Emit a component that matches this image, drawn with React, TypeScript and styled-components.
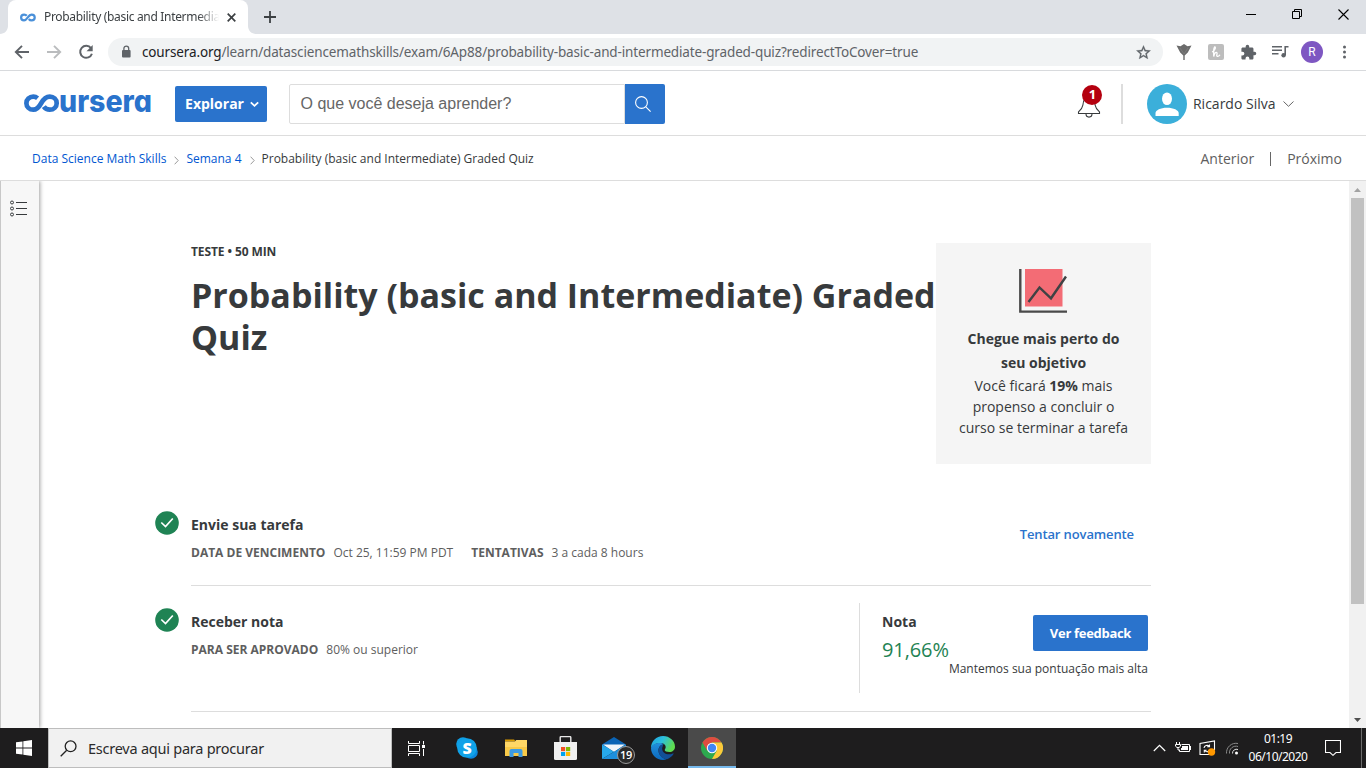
import React from 'react';
import styled, { createGlobalStyle } from 'styled-components';

const BLUE = '#2a73cc';
const UI = '"Noto Sans", "Open Sans", sans-serif';
const BODY = '"Open Sans", "Noto Sans", sans-serif';

const GlobalStyle = createGlobalStyle`
  * { box-sizing: border-box; }
  body { margin: 0; background: #fff; overflow: hidden; font-family: ${BODY}; }
  button { font: inherit; border: 0; padding: 0; background: none; }
  h1, p { margin: 0; }
  svg { display: block; flex: none; }
`;

const Screen = styled.div`
  width: 1366px;
  height: 768px;
  display: flex;
  flex-direction: column;
  overflow: hidden;
  background: #fff;
`;

const Label = styled.span<{ $size?: number; $weight?: number; $color?: string; $track?: number; $line?: number }>`
  font-size: ${p => p.$size ?? 14}px;
  font-weight: ${p => p.$weight ?? 400};
  color: ${p => p.$color ?? '#373a3c'};
  letter-spacing: ${p => p.$track ?? 0}px;
  line-height: ${p => p.$line ?? 20}px;
  white-space: nowrap;
`;

/* Browser chrome */
const TabStrip = styled.div`
  height: 34px;
  flex: none;
  background: #dee1e6;
  display: flex;
  justify-content: space-between;
`;
const TabGroup = styled.div`
  display: flex;
  align-items: center;
`;
const TabCurve = styled.svg`
  align-self: flex-end;
`;
const Tab = styled.div`
  width: 240px;
  height: 34px;
  padding: 0 10px 0 12px;
  display: flex;
  align-items: center;
  background: #fff;
  border-radius: 8px 8px 0 0;
`;
const TabTitle = styled.div`
  width: 175px;
  margin: 0 8px 0 8px;
  overflow: hidden;
  white-space: nowrap;
  font: 12px/18px ${UI};
  letter-spacing: -0.32px;
  color: #3c4043;
  mask-image: linear-gradient(to right, #000 88%, transparent);
`;
const NewTab = styled.div`
  margin-left: 8px;
`;
const WindowButtons = styled.div`
  display: flex;
  align-items: center;
  height: 29px;
  gap: 35px;
  padding-right: 17px;
`;
const Toolbar = styled.div`
  height: 37px;
  flex: none;
  display: flex;
  align-items: center;
  padding: 0 6px 0 14px;
  border-bottom: 1px solid #d8dadd;
`;
const NavButtons = styled.div`
  display: flex;
  gap: 16px;
  width: 94px;
`;
const Omnibox = styled.div`
  width: 1055px;
  height: 28px;
  padding: 0 11px 0 12px;
  border-radius: 14px;
  background: #f1f3f4;
  display: flex;
  align-items: center;
`;
const Url = styled.div`
  flex: 1;
  margin-left: 10px;
  font: 13.5px/20px ${UI};
  letter-spacing: -0.14px;
  color: #5f6368;
  white-space: nowrap;
  b { font-weight: 400; color: #202124; }
`;
const Extensions = styled.div`
  display: grid;
  grid-template-columns: repeat(6, 32px);
  align-items: center;
  justify-items: center;
  margin-left: auto;
`;
const ProfileDot = styled.div`
  width: 22px;
  height: 22px;
  border-radius: 50%;
  background: #7e57c2;
  color: #fff;
  font: 12px/22px Roboto, sans-serif;
  text-align: center;
`;

/* Site header */
const SiteHeader = styled.header`
  height: 65px;
  flex: none;
  display: flex;
  align-items: center;
  padding: 0 72px 0 24px;
  border-bottom: 1px solid #ddd;
`;
const LogoArt = styled.svg`
  overflow: visible;
`;
const Explore = styled.button`
  width: 92px;
  height: 36px;
  margin: 1px 22px 0 23px;
  padding-left: 2px;
  border-radius: 2px;
  background: ${BLUE};
  display: flex;
  align-items: center;
  justify-content: center;
  gap: 6px;
`;
const ExploreArrow = styled.svg`
  margin-top: 2px;
`;
const Search = styled.div`
  width: 376px;
  height: 40px;
  margin-top: 1px;
  display: flex;
`;
const SearchField = styled.div`
  flex: 1;
  padding-left: 10.5px;
  border: 1px solid #ddd;
  border-radius: 2px 0 0 2px;
  font: 16px/37px "Liberation Sans", Arial, sans-serif;
  color: #666;
`;
const SearchButton = styled.button`
  width: 40px;
  display: grid;
  place-items: center;
  background: ${BLUE};
  border-radius: 0 2px 2px 0;
  svg { margin-right: 4px; }
`;
const Account = styled.div`
  margin: 1px 0 0 auto;
  display: flex;
  align-items: center;
  height: 40px;
`;
const Bell = styled.div`
  position: relative;
  width: 24px;
  height: 40px;
  margin-right: 20px;
`;
const Badge = styled.span`
  position: absolute;
  left: 5px;
  top: 1px;
  width: 20px;
  height: 20px;
  border-radius: 50%;
  background: #b4000f;
  color: #fff;
  font-size: 13px;
  font-weight: 700;
  line-height: 19px;
  text-align: center;
`;
const BellIcon = styled.svg`
  margin-top: 8px;
`;
const HeaderRule = styled.i`
  width: 2px;
  height: 40px;
  margin-right: 24px;
  background: #ddd;
`;
const Name = styled.div`
  margin: 0 7.5px 0 5.6px;
  display: flex;
`;

const CrumbBar = styled.nav`
  height: 45px;
  flex: none;
  display: flex;
  align-items: center;
  justify-content: space-between;
  padding: 2px 24px 0 32px;
  border-bottom: 1px solid #ddd;
`;
const Crumbs = styled.div`
  display: flex;
  align-items: center;
`;
const CrumbArrow = styled.svg`
  margin: 2px 7px 0 8px;
`;
const Pager = styled.div`
  display: flex;
  align-items: center;
`;
const PagerRule = styled.i`
  width: 1px;
  height: 14px;
  margin: 0 16px;
  background: #666;
`;

/* Page body */
const Body = styled.div`
  flex: 1;
  min-height: 0;
  display: flex;
`;
const Rail = styled.aside`
  width: 39px;
  margin-right: 1px;
  padding: 19px 0 0 9px;
  border-left: 1px solid #c8c8c8;
  background: #f7f7f7;
  box-shadow: 1px 0 4px rgba(0, 0, 0, 0.38);
  clip-path: inset(0 -6px 0 0);
`;
const Main = styled.main`
  flex: 1;
  padding-left: 151px;
`;
const Column = styled.div`
  width: 960px;
`;
const Intro = styled.section`
  height: 316px;
  padding-top: 62px;
  display: flex;
`;
const Heading = styled.div`
  width: 745px;
  flex: none;
`;
const Title = styled.h1`
  margin-top: 13px;
  font-size: 34px;
  line-height: 42px;
  font-weight: 700;
  color: #373a3c;
`;
const Promo = styled.aside`
  width: 215px;
  height: 221px;
  padding-top: 26px;
  background: #f5f5f5;
  display: flex;
  flex-direction: column;
  align-items: center;
  text-align: center;
  color: #373a3c;
`;
const PromoIcon = styled.svg`
  margin-right: 1px;
`;
const PromoTitle = styled.p`
  margin-top: 14px;
  font-size: 14px;
  font-weight: 700;
  line-height: 24px;
`;
const PromoText = styled.p`
  font-size: 14px;
  line-height: 21px;
`;
const Step = styled.section<{ $height: number; $top: number }>`
  height: ${p => p.$height}px;
  padding-top: ${p => p.$top}px;
  border-bottom: 1px solid #ddd;
  display: flex;
`;
const StepMark = styled.div`
  width: 36px;
  margin: -2px 0 0 -36px;
`;
const StepText = styled.div`
  display: flex;
  flex-direction: column;
`;
const Facts = styled.div`
  display: flex;
  margin-top: 7px;
  gap: 8px;
`;
const FactGap = styled.i`
  width: 2px;
`;
const Retry = styled.button`
  display: flex;
  height: 20px;
  margin: 11px 17px 0 auto;
`;
const Grade = styled.div`
  width: 292px;
  height: 90px;
  margin: -7px 0 0 auto;
  padding: 7px 3px 0 22px;
  border-left: 1px solid #ddd;
`;
const GradeTop = styled.div`
  display: flex;
  justify-content: space-between;
  align-items: flex-start;
  height: 50px;
`;
const Score = styled.div`
  display: flex;
  flex-direction: column;
  gap: 1px;
`;
const Feedback = styled.button`
  width: 115px;
  height: 36px;
  margin-top: 5px;
  padding-bottom: 2px;
  border-radius: 2px;
  background: ${BLUE};
`;
const GradeNote = styled.div`
  display: flex;
  justify-content: flex-end;
`;
const Scrollbar = styled.div`
  width: 17px;
  padding: 0 2px;
  background: #f1f1f1;
  display: flex;
  flex-direction: column;
  align-items: stretch;
`;
const ScrollArrow = styled.div`
  height: 17px;
  display: grid;
  place-items: center;
`;
const Thumb = styled.div`
  height: 406px;
  background: #c1c1c1;
  margin-bottom: auto;
`;

/* Taskbar */
const Taskbar = styled.footer`
  height: 40px;
  flex: none;
  display: flex;
  background: #1e1d1e;
`;
const Start = styled.div`
  width: 48px;
  display: grid;
  place-items: center;
`;
const TaskSearch = styled.div`
  width: 344px;
  padding-left: 11px;
  display: flex;
  align-items: center;
  gap: 11px;
  background: #f1f1f1;
  border: 1px solid #bdbdbd;
`;
const TaskLabel = styled.span`
  font: 14.5px/20px ${UI};
  letter-spacing: -0.24px;
  color: #2b2b2b;
`;
const TaskButton = styled.div<{ $active?: boolean; $first?: boolean }>`
  position: relative;
  width: 48px;
  margin-right: ${p => (p.$first ? 3 : 1)}px;
  display: grid;
  place-items: center;
  background: ${p => (p.$active ? '#4a4a4a' : 'transparent')};
  box-shadow: ${p => (p.$active ? 'inset 0 -2px #76b9ed' : 'none')};
`;
const MailCount = styled.span`
  position: absolute;
  left: 27px;
  top: 18px;
  width: 18px;
  height: 18px;
  border-radius: 50%;
  border: 1px solid #9a9a9a;
  background: #2a2a2a;
  color: #fff;
  font: 600 11px/16px ${BODY};
  letter-spacing: -0.3px;
  text-align: center;
`;
const Tray = styled.div`
  margin-left: auto;
  display: flex;
  align-items: center;
`;
const TrayIcons = styled.div`
  display: flex;
  align-items: center;
  gap: 7px;
  margin-right: 9px;
`;
const Clock = styled.div`
  width: 60px;
  font: 12px/18px ${UI};
  letter-spacing: -0.5px;
  color: #fff;
  text-align: center;
`;
const Notice = styled.div`
  margin: 0 20px 0 17px;
`;
const Peek = styled.i`
  width: 5px;
  height: 40px;
  border-left: 1px solid #6b6b6b;
`;

const TabIcon = () => (
  <svg width="16" height="9" viewBox="0 0 36 18" fill="none" stroke="#4a90d9" strokeWidth="5">
    <path d="M15.300 5.100C13.800 3.200 11.700 2.500 9.200 2.500C5.300 2.500 2.500 5.200 2.500 9s2.700 6.500 6.600 6.500c7.600 0 8.600-13 17-13 4 0 7 2.700 7 6.500s-3 6.500-6.900 6.500c-2.700 0-4.900-1.100-6.300-3.100" />
  </svg>
);

const Logo = () => (
  <LogoArt width="128" height="24" viewBox="0 0 128 24">
    <path fill="none" stroke={BLUE} strokeWidth="4.700" d="M13.600 7.200C12.400 6.200 11 5.700 9.300 5.700C5.400 5.700 2.400 8.500 2.400 12.200s3 6.500 6.900 6.500c3.300 0 5.500-2.200 7.700-6.200c2.300-4.200 4.900-6.800 8.800-6.800c3.900 0 6.900 2.800 6.900 6.500s-3 6.500-6.900 6.500c-2.500 0-4.700-1.100-6-3" />
    <text x="35" y="21.200" fontFamily="Inter, sans-serif" fontWeight="800" fontSize="30.500" fill={BLUE} textLength="93" lengthAdjust="spacingAndGlyphs" style={{ fontFeatureSettings: '"cv11"' }}>ursera</text>
  </LogoArt>
);

const Check = () => (
  <svg width="24" height="24" viewBox="0 0 24 24">
    <circle cx="12" cy="12" r="11.800" fill="#1f8354" />
    <path d="M6.300 11.500l4.200 4L17.800 7.500" fill="none" stroke="#fff" strokeWidth="1.700" />
  </svg>
);

const CrumbSep = () => (
  <CrumbArrow width="5" height="9" viewBox="0 0 5 9" fill="none" stroke="#999">
    <path d="M.6.700l3.600 3.800L.6 8.300" />
  </CrumbArrow>
);

export default function App() {
  return (
    <Screen>
      <GlobalStyle />
      <TabStrip>
        <TabGroup>
          <TabCurve width="8" height="8"><path d="M8 0v8H0c4.400 0 8-3.600 8-8z" fill="#fff" /></TabCurve>
          <Tab>
            <TabIcon />
            <TabTitle>Probability (basic and Intermedia</TabTitle>
            <svg width="9" height="9" viewBox="0 0 9 9" stroke="#3c4043" strokeWidth="1.700"><path d="M.7.700l7.600 7.600M8.300.700L.7 8.300" /></svg>
          </Tab>
          <TabCurve width="8" height="8"><path d="M0 0v8h8c-4.400 0-8-3.600-8-8z" fill="#fff" /></TabCurve>
          <NewTab>
            <svg width="12" height="12" stroke="#3c4043" strokeWidth="1.800"><path d="M6 0v12M0 6h12" /></svg>
          </NewTab>
        </TabGroup>
        <WindowButtons>
          <svg width="11" height="11" stroke="#000"><path d="M0 5.500h10" /></svg>
          <svg width="11" height="11" fill="none" stroke="#000"><path d="M.5 2.500h7v7h-7zM2.500 2.500v-2h7v7h-2" /></svg>
          <svg width="11" height="11" stroke="#000" strokeWidth="1.100"><path d="M.5.500l10 10M10.500.500l-10 10" /></svg>
        </WindowButtons>
      </TabStrip>
      <Toolbar>
        <NavButtons>
          <svg width="16" height="16" viewBox="0 0 16 16" fill="none" stroke="#5f6368" strokeWidth="1.900"><path d="M15 8H2.500M8 1.800L1.800 8 8 14.200" /></svg>
          <svg width="16" height="16" viewBox="0 0 16 16" fill="none" stroke="#babcbe" strokeWidth="1.900"><path d="M1 8h12.500M8 1.800L14.200 8 8 14.200" /></svg>
          <svg width="16" height="16" viewBox="0 0 16 16"><path d="M13 4.200A6 6 0 1 0 13.900 9.700" fill="none" stroke="#5f6368" strokeWidth="2" /><path d="M14.700 1v6.200H8.500z" fill="#5f6368" /></svg>
        </NavButtons>
        <Omnibox>
          <svg width="12" height="14" viewBox="0 0 12 14"><rect x="2" y="5" width="8.600" height="7.600" rx="1" fill="#5f6368" /><path d="M3.900 5.500V3.500a2.400 2.400 0 0 1 4.800 0v2" fill="none" stroke="#5f6368" strokeWidth="1.300" /></svg>
          <Url><b>coursera.org</b>/learn/datasciencemathskills/exam/6Ap88/probability-basic-and-intermediate-graded-quiz?redirectToCover=true</Url>
          <svg width="17" height="17" viewBox="0 0 24 24" fill="#5f6368"><path d="M22 9.240l-7.190-.62L12 2 9.190 8.630 2 9.240l5.460 4.730L5.820 21 12 17.270 18.180 21l-1.630-7.030L22 9.240zM12 15.400l-3.760 2.270 1-4.280-3.320-2.880 4.380-.38L12 6.100l1.710 4.040 4.380.38-3.320 2.880 1 4.280L12 15.400z" stroke="#5f6368" strokeWidth=".4" /></svg>
        </Omnibox>
        <Extensions>
          <svg width="18" height="17" viewBox="0 0 18 17"><path d="M1.500 1.500l4 .8L9 0l3.500 2.300 4-.8L12.800 8.500 9.700 11.500v4.500H8.300v-4.500L5.200 8.500z" fill="#6b6b6b" /><path d="M5 4l4 6 4-6" fill="none" stroke="#7c7c7c" /></svg>
          <svg width="16" height="16" viewBox="0 0 16 16"><rect width="16" height="16" rx="2" fill="#bdbdbd" /><path d="M4.500 7.800C6.300 6.800 7.800 4.300 7.300 3.200S5.700 4 5.700 6.500V12.600C6.300 9.800 7.300 8.200 8.400 8.300c1.300.1.300 2.400.3 3.300s1.800 1.200 3-.4" fill="none" stroke="#fff" strokeWidth="1.300" strokeLinecap="round" /></svg>
          <svg width="17" height="17" viewBox="0 0 24 24" fill="#5f6368"><path d="M20.500 11H19V7c0-1.100-.9-2-2-2h-4V3.500a2.500 2.500 0 0 0-5 0V5H4c-1.100 0-2 .9-2 2v3.800h1.500a2.700 2.700 0 0 1 0 5.400H2V20c0 1.100.9 2 2 2h3.800v-1.500a2.700 2.700 0 0 1 5.400 0V22H17c1.100 0 2-.9 2-2v-4h1.500a2.500 2.500 0 0 0 0-5z" /></svg>
          <svg width="17" height="14" viewBox="0 0 17 14" fill="none" stroke="#5f6368" strokeWidth="1.600"><path d="M0 1.800h10M0 5.300h10M0 8.800h6.500M13.200 10V1.800h3.300" /><circle cx="11.600" cy="10.200" r="2.200" fill="#5f6368" stroke="none" /></svg>
          <ProfileDot>R</ProfileDot>
          <svg width="16" height="16" viewBox="0 0 16 16" fill="#5f6368"><circle cx="8.500" cy="2.900" r="1.500" /><circle cx="8.500" cy="8" r="1.500" /><circle cx="8.500" cy="13.100" r="1.500" /></svg>
        </Extensions>
      </Toolbar>

      <SiteHeader>
        <Logo />
        <Explore>
          <Label $weight={700} $color="#fff">Explorar</Label>
          <ExploreArrow width="9" height="7" viewBox="0 0 9 7" fill="none" stroke="#fff" strokeWidth="1.800"><path d="M.8 1.300l3.700 3.500 3.700-3.500" /></ExploreArrow>
        </Explore>
        <Search>
          <SearchField>O que você deseja aprender?</SearchField>
          <SearchButton>
            <svg width="16" height="16" viewBox="0 0 16 16" fill="none" stroke="#fff" strokeWidth="1.100"><circle cx="6.500" cy="6.500" r="5.900" /><path d="M10.800 10.800l4.800 4.800" /></svg>
          </SearchButton>
        </Search>
        <Account>
          <Bell>
            <BellIcon width="24" height="28" viewBox="0 0 24 28" fill="none" stroke="#373a3c" strokeWidth="1.100"><path d="M1.500 21.500h21v-1.600c-2.300-2-4-3.700-4.400-6.900C17.500 7.500 15 4.500 12 4.500S6.500 7.500 5.900 13c-.4 3.200-2.100 4.900-4.400 6.900zM9 21.800a3 3.300 0 0 0 6 0" /></BellIcon>
            <Badge>1</Badge>
          </Bell>
          <HeaderRule />
          <svg width="40" height="40" viewBox="0 0 40 40"><circle cx="20" cy="20" r="20" fill="#3bafda" /><ellipse cx="20" cy="14.700" rx="5" ry="6.300" fill="#fff" /><path d="M8.500 32v-3c0-2.800 5-5.300 11.500-5.300s11.700 2.500 11.700 5.300v3z" fill="#fff" /></svg>
          <Name><Label>Ricardo Silva</Label></Name>
          <svg width="11" height="7" viewBox="0 0 11 7" fill="none" stroke="#666"><path d="M.5 1.500l5 4.800 5-4.800" /></svg>
        </Account>
      </SiteHeader>
      <CrumbBar>
        <Crumbs>
          <Label $size={12} $color="#0156d1">Data Science Math Skills</Label>
          <CrumbSep />
          <Label $size={12} $color="#0156d1">Semana 4</Label>
          <CrumbSep />
          <Label $size={12}>Probability (basic and Intermediate) Graded Quiz</Label>
        </Crumbs>
        <Pager>
          <Label $color="#5e5e5e">Anterior</Label>
          <PagerRule />
          <Label $color="#5e5e5e">Próximo</Label>
        </Pager>
      </CrumbBar>

      <Body>
        <Rail>
          <svg width="18" height="18" viewBox="0 0 18 18" fill="none" stroke="#373a3c"><circle cx="2" cy="2.500" r="1.500" /><circle cx="2" cy="8.500" r="1.500" /><circle cx="2" cy="14.500" r="1.500" /><path d="M6 2.500h11M6 8.500h11M6 14.500h11" /></svg>
        </Rail>
        <Main>
          <Column>
            <Intro>
              <Heading>
                <Label as="p" $size={12} $weight={700} $line={18} $track={-0.1}>TESTE • 50 MIN</Label>
                <Title>Probability (basic and Intermediate) Graded Quiz</Title>
              </Heading>
              <Promo>
                <PromoIcon width="48" height="44" viewBox="0 0 48 44" fill="none"><path d="M6 0h37.500v37.500H6z" fill="#f36c75" /><path d="M1.300 0v42.600H48" stroke="#4a4a4a" strokeWidth="2.400" /><path d="M9.500 33l11-14.500L32 29.300 47 7.500" stroke="#404244" strokeWidth="2.400" /></PromoIcon>
                <PromoTitle>Chegue mais perto do<br />seu objetivo</PromoTitle>
                <PromoText>Você ficará <b>19%</b> mais<br />propenso a concluir o<br />curso se terminar a tarefa</PromoText>
              </Promo>
            </Intro>
            <Step $height={89} $top={16}>
              <StepMark><Check /></StepMark>
              <StepText>
                <Label $weight={700} $line={24}>Envie sua tarefa</Label>
                <Facts>
                  <Label $size={12} $weight={700} $line={18} $color="#5e5e5e">DATA DE VENCIMENTO</Label>
                  <Label $size={12} $line={18} $color="#5e5e5e">Oct 25, 11:59 PM PDT</Label>
                  <FactGap />
                  <Label $size={12} $weight={700} $line={18} $color="#5e5e5e">TENTATIVAS</Label>
                  <Label $size={12} $line={18} $color="#5e5e5e">3 a cada 8 hours</Label>
                </Facts>
              </StepText>
              <Retry><Label $size={13} $weight={600} $color={BLUE} $track={-0.12}>Tentar novamente</Label></Retry>
            </Step>
            <Step $height={126} $top={24}>
              <StepMark><Check /></StepMark>
              <StepText>
                <Label $weight={700} $line={24}>Receber nota</Label>
                <Facts>
                  <Label $size={12} $weight={700} $line={18} $color="#5e5e5e">PARA SER APROVADO</Label>
                  <Label $size={12} $line={18} $color="#5e5e5e">80% ou superior</Label>
                </Facts>
              </StepText>
              <Grade>
                <GradeTop>
                  <Score>
                    <Label $weight={700} $line={24}>Nota</Label>
                    <Label $size={20} $line={30} $color="#1f8354" $track={-0.1}>91,66%</Label>
                  </Score>
                  <Feedback><Label $size={13} $weight={700} $color="#fff" $track={-0.3}>Ver feedback</Label></Feedback>
                </GradeTop>
                <GradeNote><Label $size={12} $line={18}>Mantemos sua pontuação mais alta</Label></GradeNote>
              </Grade>
            </Step>
          </Column>
        </Main>
        <Scrollbar>
          <ScrollArrow><svg width="7" height="4"><path d="M0 4l3.500-4L7 4z" fill="#a3a3a3" /></svg></ScrollArrow>
          <Thumb />
          <ScrollArrow><svg width="7" height="4"><path d="M0 0l3.500 4L7 0z" fill="#505050" /></svg></ScrollArrow>
        </Scrollbar>
      </Body>

      <Taskbar>
        <Start>
          <svg width="16" height="16" viewBox="0 0 16 16" fill="#fff"><path d="M0 2.300l6.500-.9v6.200H0zM7.300 1.300L16 0v7.600H7.300zM0 8.400h6.500v6.200L0 13.700zM7.300 8.400H16V16l-8.700-1.300z" /></svg>
        </Start>
        <TaskSearch>
          <svg width="17" height="17" viewBox="0 0 17 17" fill="none" stroke="#222" strokeWidth="1.300"><circle cx="10.600" cy="6.300" r="5.400" /><path d="M6.700 10.200L.7 16.200" /></svg>
          <TaskLabel>Escreva aqui para procurar</TaskLabel>
        </TaskSearch>
        <TaskButton $first>
          <svg width="17" height="15" viewBox="0 0 17 15" fill="none" stroke="#fff"><path d="M.5 0v2.500h11V0M.5 4.500h11v6H.5zM.5 15v-2.500h11V15M15.500 0v3.500M15.500 8v7" /><path d="M14 4h3v3h-3z" fill="#fff" stroke="none" /></svg>
        </TaskButton>
        <TaskButton>
          <svg width="22" height="22" viewBox="0 0 22 22"><circle cx="7" cy="7" r="6.800" fill="#0f9fe6" /><circle cx="15" cy="15" r="6.800" fill="#0c86dc" /><circle cx="11" cy="11" r="9.800" fill="#10a2e8" /><text x="11" y="16.800" textAnchor="middle" fontFamily="Open Sans, sans-serif" fontWeight="800" fontSize="16" fill="#fff">S</text></svg>
        </TaskButton>
        <TaskButton>
          <svg width="22" height="20" viewBox="0 0 22 20"><path d="M0 1.500h9l2 2H0z" fill="#d99a00" /><path d="M0 3.500h10l1.200-1.500H22V18H0z" fill="#ffd766" /><path d="M0 9h22v9H0z" fill="#f8c948" /><path d="M4.500 19v-6a2 2 0 0 1 2-2h9a2 2 0 0 1 2 2v6h-4v-4h-5v4z" fill="#3d9ae2" /></svg>
        </TaskButton>
        <TaskButton>
          <svg width="23" height="24" viewBox="0 0 23 24"><path d="M6.200 7V1.600q0-1 1-1h8.600q1 0 1 1V7" fill="none" stroke="#e9e9e9" strokeWidth="1.400" /><path d="M0 6h23v16.500q0 1.500-1.500 1.500h-20Q0 24 0 22.500z" fill="#f0f0f0" /><path d="M7 11h4.200v4.200H7z" fill="#f25022" /><path d="M12 11h4.200v4.200H12z" fill="#7fba00" /><path d="M7 16h4.200v4H7z" fill="#00a4ef" /><path d="M12 16h4.200v4H12z" fill="#ffb900" /></svg>
        </TaskButton>
        <TaskButton>
          <svg width="24" height="22" viewBox="0 0 24 22"><path d="M0 7.500L12 0l12 7.500v5H0z" fill="#0b64b5" /><path d="M1 7.500h22L12 15z" fill="#f2f6fa" /><path d="M0 7.500l12 7.200L0 22z" fill="#27a8ea" /><path d="M24 7.500L0 22h24z" fill="#1e90dc" /></svg>
          <MailCount>19</MailCount>
        </TaskButton>
        <TaskButton>
          <svg width="24" height="24" viewBox="0 0 24 24">
            <defs>
              <linearGradient id="edgeTop" x1="0" y1="0" x2="1" y2=".4"><stop offset="0" stopColor="#1d9fe0" /><stop offset=".5" stopColor="#2cc0de" /><stop offset="1" stopColor="#5fdc50" /></linearGradient>
              <linearGradient id="edgeBody" x1="0" y1="0" x2="0" y2="1"><stop offset="0" stopColor="#2190dc" /><stop offset="1" stopColor="#0c68bd" /></linearGradient>
            </defs>
            <path d="M0 12C0 5.300 5.300 0 12 0s12 5 12 10.700c0 3.200-2.500 5.300-5.500 5.300-3 0-4.800-1-4.800-2 0-.8 1-1.200 1-3 0-2-2-4-5-4C5 7 1.500 9 0 12z" fill="url(#edgeTop)" />
            <path d="M0 12c1-3.300 4.500-5 8.700-5 1.700 0 3 .4 4.200 1.200C9.500 8.500 7.500 11.300 7.500 14.500c0 4 3.500 8 8 8.700C14.400 23.800 13.300 24 12 24 5.400 24 0 18.600 0 12z" fill="url(#edgeBody)" />
            <path d="M11 8.600C8.800 9.700 7.500 12 7.500 14.500c0 4.500 4 8.700 8.700 8.700 2.600-1 4.900-2.800 6.300-5.200.3-.6-.2-.9-.7-.6-5 2.500-10.600-.2-10.600-4.700 0-1.800.8-2.400.8-3.100 0-.5-.4-.9-1-1z" fill="#124f96" />
          </svg>
        </TaskButton>
        <TaskButton $active>
          <svg width="22" height="22" viewBox="0 0 22 22"><circle cx="11" cy="11" r="11" fill="#2da94f" /><path d="M1.470 5.500A11 11 0 0 1 20.500 5.500H11L6.240 13.750z" fill="#df4c40" /><path d="M20.530 5.500A11 11 0 0 1 11 22l4.760-8.250L11 5.500z" fill="#fdc93a" /><circle cx="11" cy="11" r="5.200" fill="#fff" /><circle cx="11" cy="11" r="4.200" fill="#4285f4" /></svg>
        </TaskButton>
        <Tray>
          <TrayIcons>
            <svg width="15" height="8" viewBox="0 0 15 8" fill="none" stroke="#fff" strokeWidth="1.200"><path d="M.8 7l5.700-5.700L12.200 7" /></svg>
            <svg width="17" height="12" viewBox="0 0 17 12" fill="none" stroke="#fff"><path d="M6.500 2.500h8v7h-10V8M15.500 4v4" /><path d="M7 4h6v4H6V6h1z" fill="#fff" stroke="none" /><path d="M1.500 0v2M4.500 0v2M.5 2.500h5v1.700L4 5.500H2L.5 4.200zM3 5.500v2.500h2" /></svg>
            <svg width="17" height="16" viewBox="0 0 17 16" fill="none" stroke="#fff" strokeWidth="1.100"><path d="M10 14.500H1V3.500l14.500-2.500V10" /><path d="M5 8a3 3 0 0 1 5.300-1.500M10.500 4.500v2.300H8.200M11 9.500a3 3 0 0 1-5.300 1M5.300 12.500v-2.200h2.300" /><circle cx="12.500" cy="12" r="3.700" fill="#ff9800" stroke="none" /></svg>
            <svg width="16" height="14" viewBox="0 0 16 14" fill="none" stroke="#8a8a8a"><path d="M3.500 12.500A9.500 9.500 0 0 1 15 2.500M6.500 12.500A6.500 6.500 0 0 1 15 5.500" /><path d="M9.500 12.500A4 4 0 0 1 15 8.500" stroke="#ddd" /><circle cx="13.500" cy="12" r="1.500" fill="#fff" stroke="none" /></svg>
          </TrayIcons>
          <Clock>01:19<br />06/10/2020</Clock>
          <Notice>
            <svg width="16" height="16" viewBox="0 0 16 16" fill="none" stroke="#fff" strokeWidth="1.100"><path d="M.5.500h15v12h-4.500L8 15.300l-3-2.800H.5z" /></svg>
          </Notice>
          <Peek />
        </Tray>
      </Taskbar>
    </Screen>
  );
}
